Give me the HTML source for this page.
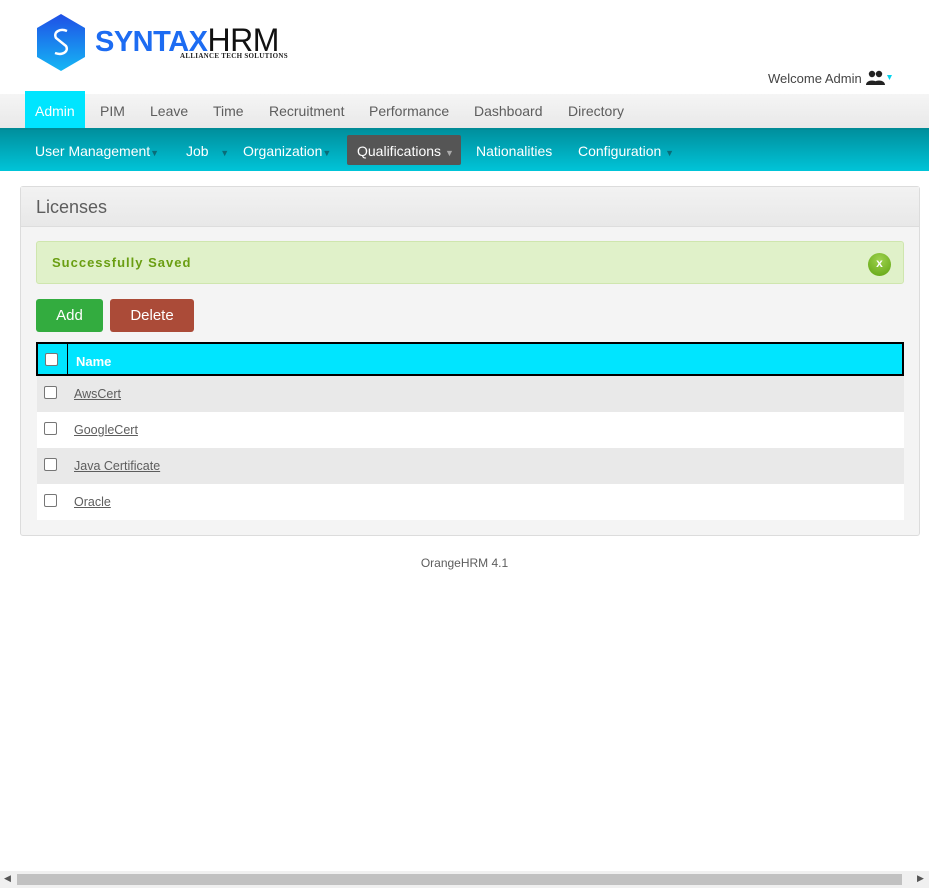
<!DOCTYPE html>
<html><head><style>
*{box-sizing:border-box;margin:0;padding:0}
body{width:929px;height:888px;background:#fff;font-family:"Liberation Sans",Arial,sans-serif;position:relative;overflow:hidden;font-size:14px;color:#5d5d5d}
.abs{position:absolute}
.top{left:0;top:94px;width:929px;height:35px;background:linear-gradient(#f5f5f5,#e8e8e8)}
.top span{position:absolute;top:9px;font-size:14px;color:#5d5d5d}
.sub{left:0;top:128px;width:929px;height:43px;background:linear-gradient(#00909e,#00c4d8);border-top:2px solid #008b96}
.sub span{position:absolute;top:13px;font-size:14px;color:#fff}
.sub i{font-style:normal;font-size:9px;color:#0a6c78}
.panel{left:20px;top:186px;width:900px;height:350px;background:#f4f4f4;border:1px solid #dcdcdc;border-radius:3px}
.row{position:absolute;left:16px;width:867px;height:36px}
.row a{position:absolute;left:37px;top:11px;color:#5d5d5d;text-decoration:underline;font-size:12.5px}
.cb{position:absolute;left:7px;top:10px;width:13px;height:13px;border:1px solid #767676;border-radius:2px;background:#fff}
</style></head><body>
<svg class="abs" style="left:36px;top:14px" width="50" height="57" viewBox="0 0 50 57"><defs><linearGradient id="g" x1="0" y1="0" x2="0" y2="1"><stop offset="0" stop-color="#1f4fe6"/><stop offset="1" stop-color="#15b7f5"/></linearGradient></defs><polygon points="25,0 49,14 49,43 25,57 1,43 1,14" fill="url(#g)"/><path d="M31 17 C24 14 17 18 20 24 L30 32 C33 37 27 42 19 39" stroke="#fff" stroke-width="2.5" fill="none"/></svg>
<div class="abs" style="left:95px;top:22px;font-size:29px;font-weight:bold;color:#1d6cf2;letter-spacing:-0.5px">SYNTAX<span style="color:#111;font-weight:normal;font-size:32px">HRM</span></div>
<div class="abs" style="left:180px;top:52px;font-size:7px;font-weight:bold;color:#222;font-family:'Liberation Serif',serif;letter-spacing:0.3px">ALLIANCE TECH SOLUTIONS</div>
<div class="abs" style="left:768px;top:71px;font-size:13px;color:#444">Welcome Admin</div>
<svg class="abs" style="left:866px;top:70px" width="28" height="16" viewBox="0 0 28 16"><circle cx="6" cy="4" r="3.2" fill="#222"/><circle cx="13" cy="4" r="3.2" fill="#222"/><path d="M0 15 C0 9 12 9 12 15Z M7 15 C7 9 19 9 19 15Z" fill="#222"/><path d="M21 5 L26 5 L23.5 10Z" fill="#00d4ef"/></svg>
<div class="abs top">
<div class="abs" style="left:25px;top:-3px;width:60px;height:39px;background:#00e5ff"></div>
<span style="left:35px;color:#fff">Admin</span><span style="left:100px">PIM</span><span style="left:150px">Leave</span><span style="left:213px">Time</span><span style="left:269px">Recruitment</span><span style="left:369px">Performance</span><span style="left:474px">Dashboard</span><span style="left:568px">Directory</span>
</div>
<div class="abs sub">
<div class="abs" style="left:347px;top:5px;width:114px;height:30px;background:#555;border-radius:2px"></div>
<span style="left:35px">User Management<i>▼</i></span><span style="left:186px">Job &nbsp;&nbsp;<i>▼</i></span><span style="left:243px">Organization<i>▼</i></span><span style="left:357px">Qualifications <i style="color:#aaa">▼</i></span><span style="left:476px">Nationalities</span><span style="left:578px">Configuration <i>▼</i></span>
</div>
<div class="abs panel">
<div class="abs" style="left:0;top:0;width:898px;height:40px;background:linear-gradient(#f2f2f2,#e8e8e8);border-bottom:1px solid #ddd"></div>
<div class="abs" style="left:15px;top:10px;font-size:18px;color:#5d5d5d">Licenses</div>
<div class="abs" style="left:15px;top:54px;width:868px;height:43px;background:#e0f1c9;border:1px solid #cfe6ae;border-radius:3px"></div>
<div class="abs" style="left:31px;top:68px;font-size:13px;font-weight:bold;color:#6a9e12;letter-spacing:1px">Successfully Saved</div>
<div class="abs" style="left:847px;top:66px;width:23px;height:23px;border-radius:50%;background:radial-gradient(circle at 50% 30%,#9ed24e,#5fa310);color:#fff;font-size:12px;font-weight:bold;text-align:center;line-height:21px">x</div>
<div class="abs" style="left:15px;top:112px;width:67px;height:33px;background:#33ac3f;border-radius:3px;color:#fff;font-size:15px;text-align:center;line-height:33px">Add</div>
<div class="abs" style="left:89px;top:112px;width:84px;height:33px;background:#ab4b38;border-radius:3px;color:#fff;font-size:15px;text-align:center;line-height:33px">Delete</div>
<div class="abs" style="left:15px;top:155px;width:868px;height:34px;background:#00e5ff;border:2px solid #000"></div>
<div class="abs" style="left:46px;top:157px;width:1px;height:30px;background:#000"></div>
<div class="cb" style="left:24px;top:166px"></div>
<div class="abs" style="left:55px;top:167px;color:#fff;font-size:13px;font-weight:bold">Name</div>
<div class="row" style="top:189px;background:#e9e9e9"><div class="cb"></div><a>AwsCert</a></div>
<div class="row" style="top:225px;background:#fff"><div class="cb"></div><a>GoogleCert</a></div>
<div class="row" style="top:261px;background:#e9e9e9"><div class="cb"></div><a>Java Certificate</a></div>
<div class="row" style="top:297px;background:#fff"><div class="cb"></div><a>Oracle</a></div>
</div>
<div class="abs" style="left:0;width:929px;top:556px;text-align:center;font-size:12px;color:#5d5d5d">OrangeHRM 4.1</div>
<div class="abs" style="left:0;top:871px;width:929px;height:17px;background:#f0f0f0"></div>
<div class="abs" style="left:17px;top:874px;width:885px;height:11px;background:#c1c1c1"></div>
<div class="abs" style="left:4px;top:873px;font-size:9px;color:#555">◀</div>
<div class="abs" style="left:917px;top:873px;font-size:9px;color:#555">▶</div>
</body></html>
